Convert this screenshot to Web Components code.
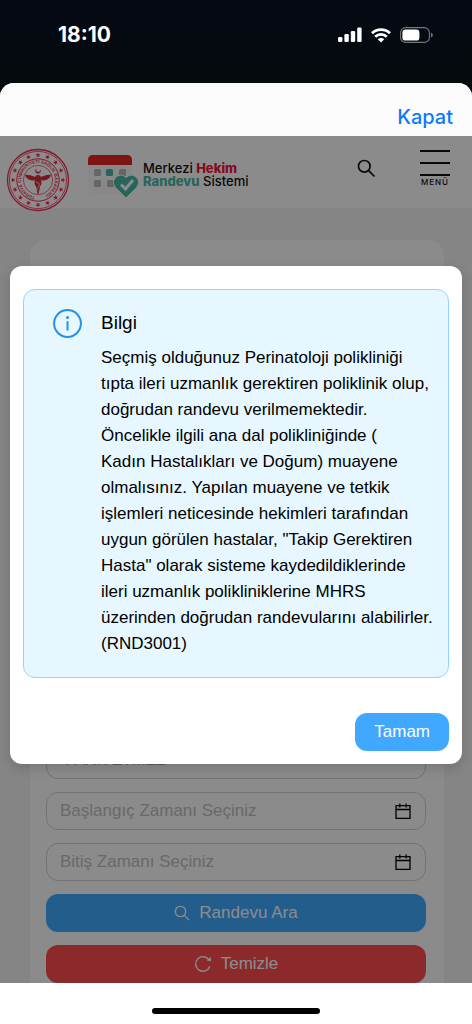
<!DOCTYPE html>
<html lang="tr">
<head>
<meta charset="utf-8">
<meta name="viewport" content="width=device-width, initial-scale=1">
<title>MHRS</title>
<style>
  html, body {
    height: 100%;
    margin: 0;
  }
  body {
    background: #050a10;
    color: #000;
    font-family: "Liberation Sans", Arial, sans-serif;
    font-size: 17px;
  }
</style>
</head>
<body>
<phone-screen>
  <status-bar slot="status" time="18:10"></status-bar>
  <sheet-toolbar slot="toolbar" label="Kapat"></sheet-toolbar>
  <site-header></site-header>
  <search-card>
    <select-field label="Hekim" value="-FARK ETMEZ-"></select-field>
    <date-field placeholder="Başlangıç Zamanı Seçiniz"></date-field>
    <date-field placeholder="Bitiş Zamanı Seçiniz"></date-field>
    <action-button icon="search">Randevu Ara</action-button>
    <action-button icon="reload" kind="danger">Temizle</action-button>
  </search-card>
  <info-modal slot="modal" heading="Bilgi">
    Seçmiş olduğunuz Perinatoloji polikliniği tıpta ileri uzmanlık gerektiren poliklinik olup, doğrudan randevu verilmemektedir. Öncelikle ilgili ana dal polikliniğinde (<br>Kadın Hastalıkları ve Doğum) muayene olmalısınız. Yapılan muayene ve tetkik işlemleri neticesinde hekimleri tarafından uygun görülen hastalar, "Takip Gerektiren Hasta" olarak sisteme kaydedildiklerinde ileri uzmanlık polikliniklerine MHRS üzerinden doğrudan randevularını alabilirler. (RND3001)
  </info-modal>
</phone-screen>

<script>
const icons = {
  search: /* html */`
    <svg viewBox="0 0 16 16" width="16" height="16" fill="none" stroke="currentColor" stroke-width="1.3" aria-hidden="true">
      <circle cx="6.5" cy="6.5" r="5.2"/><path d="M10.4 10.4L15 15"/>
    </svg>`,
  reload: /* html */`
    <svg viewBox="0 0 18 18" width="18" height="18" fill="none" stroke="currentColor" stroke-width="1.4" aria-hidden="true">
      <path d="M15.8 11.6A7.3 7.3 0 1 1 15 4.8"/><path d="M16.9 1.8v4.4l-4.2-.6z" fill="currentColor" stroke="none"/>
    </svg>`
}

class PhoneScreen extends HTMLElement {
  constructor () {
    super()
    this.attachShadow({ mode: 'open' })
    this.shadowRoot.innerHTML =
      /* html */`
      <style>
        :host {
          display: flex;
          flex-direction: column;
          height: 100vh;
          background: linear-gradient(#040914, #060b0e 83px);
        }
        .sheet {
          flex: 1;
          min-height: 0;
          display: flex;
          flex-direction: column;
          overflow: hidden;
          border-radius: 14px 14px 0 0;
          background: #fff;
        }
        .view {
          position: relative;
          flex: 1;
          min-height: 0;
          display: flex;
          flex-direction: column;
          overflow: hidden;
          background: #f3f3f3;
        }
        .mask {
          position: absolute;
          inset: 0;
          padding: 130px 10px 0;
          background: rgba(0, 0, 0, .45);
        }
        .home {
          display: flex;
          justify-content: center;
          padding: 25px 0 10px;
        }
        .home span {
          width: 168px;
          height: 6px;
          border-radius: 3px;
          background: #000;
        }
      </style>
      <slot name="status"></slot>
      <div class="sheet">
        <slot name="toolbar"></slot>
        <div class="view">
          <slot></slot>
          <div class="mask"><slot name="modal"></slot></div>
        </div>
        <div class="home"><span></span></div>
      </div>
      `
  }
}

class StatusBar extends HTMLElement {
  connectedCallback () {
    this.attachShadow({ mode: 'open' })
    this.shadowRoot.innerHTML =
      /* html */`
      <style>
        :host {
          display: flex;
          justify-content: space-between;
          align-items: center;
          height: 70px;
          padding: 0 39px 0 58px;
          margin-bottom: 13px;
          color: #fff;
          font: 700 21px/24px Inter, sans-serif;
        }
        .icons {
          display: flex;
          align-items: center;
          gap: 9px;
        }
        svg { display: block; }
      </style>
      <span>${this.getAttribute('time')}</span>
      <div class="icons">
        <svg width="24" height="16" viewBox="0 0 24 16" fill="#fff" aria-hidden="true">
          <rect x="0" y="10" width="4.4" height="5" rx="1.2"/>
          <rect x="6.4" y="7" width="4.4" height="8" rx="1.2"/>
          <rect x="12.8" y="4" width="4.4" height="11" rx="1.2"/>
          <rect x="19.2" y="0.5" width="4.4" height="14.5" rx="1.2"/>
        </svg>
        <svg width="20" height="15" viewBox="0 0 20 15" aria-hidden="true">
          <g fill="none" stroke="#fff" stroke-width="2.8">
            <path d="M1 5.2a13 13 0 0 1 18 0"/>
            <path d="M4.2 8.8a8.3 8.3 0 0 1 11.6 0"/>
          </g>
          <path d="M6.7 11.2a4.8 4.8 0 0 1 6.6 0L10 14.6z" fill="#fff"/>
        </svg>
        <svg width="33" height="16" viewBox="0 0 33 16" aria-hidden="true">
          <rect x=".6" y=".6" width="28.8" height="14.8" rx="5" fill="none" stroke="#74777b" stroke-width="1.1"/>
          <rect x="2.4" y="2.4" width="17" height="11.2" rx="3.2" fill="#fff"/>
          <path d="M31 5.4q1.9 1 1.9 2.6T31 10.6z" fill="#74777b"/>
        </svg>
      </div>
      `
  }
}

class SheetToolbar extends HTMLElement {
  connectedCallback () {
    this.attachShadow({ mode: 'open' })
    this.shadowRoot.innerHTML =
      /* html */`
      <style>
        :host {
          display: flex;
          justify-content: flex-end;
          padding: 22px 19px 7px;
          background: #fcfcfd;
        }
        button {
          border: 0;
          padding: 0;
          background: none;
          color: #0a7aff;
          font: 500 20px/24px Inter, sans-serif;
        }
      </style>
      <button type="button">${this.getAttribute('label')}</button>
      `
  }
}

class SiteHeader extends HTMLElement {
  connectedCallback () {
    this.attachShadow({ mode: 'open' })
    this.shadowRoot.innerHTML =
      /* html */`
      <style>
        :host {
          display: flex;
          align-items: center;
          height: 72px;
          padding: 0 22px 0 6px;
          background: #fdfdfd;
        }
        svg { display: block; }
        .emblem { margin-top: 16px; }
        .brand {
          display: flex;
          align-items: center;
          gap: 4px;
          margin: 10px auto 0 18px;
          color: #111;
          text-decoration: none;
          font: 500 13px/13px Inter, sans-serif;
          white-space: nowrap;
        }
        .name {
          display: grid;
          padding-bottom: 4px;
        }
        .red { color: #f0143c; font-weight: 800; }
        .green { color: #46b8a5; font-weight: 800; }
        button {
          border: 0;
          padding: 0;
          background: none;
          color: #111;
        }
        .search {
          margin-right: 44px;
          margin-bottom: 8px;
        }
        .menu {
          display: grid;
          gap: 2px;
          width: 30px;
          margin-bottom: 8px;
          font: 500 8px/8px Inter, sans-serif;
          letter-spacing: 1px;
        }
        .bars {
          display: grid;
          gap: 10px;
        }
        .bars span {
          display: block;
          height: 2px;
          background: #111;
        }
      </style>
      <svg class="emblem" width="64" height="64" viewBox="-32 -32 64 64" role="img" aria-label="Sağlık Bakanlığı">
        <defs>
          <path id="ring" d="M-3 16.6A16.9 16.9 0 1 1 3 16.6"/>
          <path id="star" d="M0-2.5L.7-.8 2.5-.7 1.1.4 1.6 2.2 0 1.2-1.6 2.2-1.1.4-2.5-.7-.7-.8z"/>
        </defs>
        <circle r="30.5" fill="#fff" stroke="#f02a50" stroke-width="1.3"/>
        <circle r="28.6" fill="none" stroke="#f02a50" stroke-width=".8"/>
        <circle r="21.2" fill="none" stroke="#f02a50"/>
        <circle r="14.6" fill="none" stroke="#f02a50" stroke-width=".7"/>
        <g class="stars" fill="#f02a50"></g>
        <text fill="#f02a50" font-family="Liberation Sans" font-weight="700" font-size="4.4"><textPath href="#ring">TÜRKİYE CUMHURİYETİ SAĞLIK BAKANLIĞI</textPath></text>
        <path d="M-13-5.5Q-7-5-4-3.4Q-2-3-1.4-5h2.8Q2-3 4-3.4Q7-5 13-5.5Q12-1 7 .2Q4 .8 3 0Q4.4 4 2 6.2L1 12 0 15-1 12-2 6.2Q-4.4 4-3 0Q-4 .8-7 .2Q-12-1-13-5.5z" fill="#d92c3c"/>
        <path d="M2.3-10.5A2.7 2.7 0 1 1-1.5-11.4 2.1 2.1 0 1 0 2.3-10.5z" fill="#f02a50"/>
        <path d="M-2 2q4 1 3.5 3T-1 8t1.5 3" fill="none" stroke="#fff" stroke-width=".7"/>
      </svg>
      <a class="brand" href="#">
        <svg width="51" height="44" viewBox="0 0 51 44" aria-hidden="true">
          <rect y="1" width="44" height="38" rx="5" fill="#f8f8f8"/>
          <path d="M0 10V5Q0 0 5 0h34q5 0 5 5v5z" fill="#e62525"/>
          <g fill="#b9b9b9">
            <rect x="6" y="14" width="7" height="7" rx="1.5"/>
            <rect x="31" y="14" width="7" height="7" rx="1.5"/>
            <rect x="6" y="25" width="7" height="7" rx="1.5"/>
            <rect x="19" y="25" width="7" height="7" rx="1.5"/>
          </g>
          <rect x="18" y="14" width="7" height="7" rx="1.5" fill="#46b8a5"/>
          <path d="M38 43L27.5 32.5Q23.5 27.5 27 23Q32.5 17.5 38 22.5Q43.5 17.5 49 23Q52.5 27.5 48.5 32.5z" fill="#46b8a5" stroke="#fdfdfd" stroke-width="1"/>
          <path d="M33 29.5l4.5 4.5 7.5-9" fill="none" stroke="#fff" stroke-width="3"/>
        </svg>
        <div class="name">
          <div>Merkezi <span class="red">Hekim</span></div>
          <div><span class="green">Randevu</span> Sistemi</div>
        </div>
      </a>
      <button class="search" type="button" aria-label="Ara">
        <svg width="19" height="19" viewBox="0 0 19 19" fill="none" stroke="currentColor" stroke-width="1.7" aria-hidden="true">
          <circle cx="7.3" cy="7.3" r="5.8"/><path d="M11.6 11.6L17.5 17.5"/>
        </svg>
      </button>
      <button class="menu" type="button">
        <div class="bars"><span></span><span></span><span></span></div>
        MENÜ
      </button>
      `
    let stars = ''
    for (let i = 0; i < 16; i++) {
      stars += `<use href="#star" transform="rotate(${i * 22.5}) translate(0 -25)"/>`
    }
    this.shadowRoot.querySelector('.stars').innerHTML = stars
  }
}

class SearchCard extends HTMLElement {
  constructor () {
    super()
    this.attachShadow({ mode: 'open' })
    this.shadowRoot.innerHTML =
      /* html */`
      <style>
        :host {
          flex: 1;
          display: flex;
          margin: 32px 28px 0 30px;
        }
        form {
          flex: 1;
          display: flex;
          flex-direction: column;
          justify-content: flex-end;
          gap: 13px;
          padding: 0 18px 0 16px;
          border-radius: 16px 16px 0 0;
          background: #fdfdfd;
        }
      </style>
      <form><slot></slot></form>
      `
  }
}

class SelectField extends HTMLElement {
  connectedCallback () {
    this.attachShadow({ mode: 'open' })
    this.shadowRoot.innerHTML =
      /* html */`
      <style>
        :host { display: block; }
        select {
          display: block;
          box-sizing: border-box;
          width: 100%;
          height: 38px;
          padding: 0 13px;
          appearance: none;
          border: 1px solid #d0d0d0;
          border-radius: 12px;
          background: none;
          color: #a5a5a5;
          font: 16px/36px "Liberation Sans", Arial, sans-serif;
        }
      </style>
      <select aria-label="${this.getAttribute('label')}">
        <option>${this.getAttribute('value')}</option>
      </select>
      `
  }
}

class DateField extends HTMLElement {
  connectedCallback () {
    this.attachShadow({ mode: 'open' })
    const placeholder = this.getAttribute('placeholder')
    this.shadowRoot.innerHTML =
      /* html */`
      <style>
        :host {
          display: flex;
          align-items: center;
          box-sizing: border-box;
          height: 38px;
          padding: 0 14px 0 13px;
          border: 1px solid #d0d0d0;
          border-radius: 12px;
        }
        input {
          flex: 1;
          min-width: 0;
          border: 0;
          padding: 0;
          outline: 0;
          background: none;
          font: 17px/36px "Liberation Sans", Arial, sans-serif;
        }
        input::placeholder { color: #bfbfbf; opacity: 1; }
      </style>
      <input type="text" placeholder="${placeholder}" aria-label="${placeholder}">
      <svg width="16" height="17" viewBox="0 0 16 17" fill="none" stroke="#000" stroke-width="1.3" aria-hidden="true">
        <path d="M1 2.6h14v12.8H1zM1 6.5h14M4.8 .5v4M11.2 .5v4"/>
      </svg>
      `
  }
}

class ActionButton extends HTMLElement {
  connectedCallback () {
    this.attachShadow({ mode: 'open' })
    this.shadowRoot.innerHTML =
      /* html */`
      <style>
        :host { display: block; --fill: #40a9ff; }
        :host([kind="danger"]) { --fill: #ff4d4f; }
        button {
          display: flex;
          justify-content: center;
          align-items: center;
          gap: 9px;
          width: 100%;
          height: 38px;
          border: 0;
          border-radius: 12px;
          background: var(--fill);
          color: #fff;
          font: 17px/20px "Liberation Sans", Arial, sans-serif;
        }
      </style>
      <button type="button">${icons[this.getAttribute('icon')]}<span><slot></slot></span></button>
      `
  }
}

class InfoModal extends HTMLElement {
  connectedCallback () {
    this.attachShadow({ mode: 'open' })
    this.shadowRoot.innerHTML =
      /* html */`
      <style>
        :host {
          display: block;
          padding: 23px 13px 13px;
          border-radius: 12px;
          background: #fff;
          box-shadow: 0 4px 12px rgba(0, 0, 0, .15);
        }
        .alert {
          display: flex;
          align-items: flex-start;
          gap: 19px;
          padding: 19px 14px 20px 29px;
          border: 1px solid #91d5ff;
          border-radius: 12px;
          background: #e6f7ff;
        }
        .alert svg { flex: none; }
        h3 {
          margin: 0 0 8px;
          font-size: 19px;
          font-weight: 400;
          line-height: 28px;
        }
        p {
          margin: 0;
          line-height: 26px;
        }
        .footer {
          display: flex;
          justify-content: flex-end;
          margin-top: 35px;
        }
        button {
          height: 38px;
          padding: 0 19px;
          border: 0;
          border-radius: 12px;
          background: #40a9ff;
          color: #fff;
          font: 17px/20px "Liberation Sans", Arial, sans-serif;
        }
      </style>
      <div role="dialog" aria-modal="true" aria-labelledby="title">
        <div class="alert">
          <svg width="29" height="29" viewBox="0 0 29 29" aria-hidden="true">
            <circle cx="14.5" cy="14.5" r="13.4" fill="none" stroke="#2490ee" stroke-width="2"/>
            <circle cx="14.5" cy="8.6" r="1.5" fill="#2490ee"/>
            <path d="M14.5 12.2v9.3" stroke="#2490ee" stroke-width="2"/>
          </svg>
          <div>
            <h3 id="title">${this.getAttribute('heading')}</h3>
            <p><slot></slot></p>
          </div>
        </div>
        <div class="footer"><button type="button">Tamam</button></div>
      </div>
      `
  }
}

customElements.define('phone-screen', PhoneScreen)
customElements.define('status-bar', StatusBar)
customElements.define('sheet-toolbar', SheetToolbar)
customElements.define('site-header', SiteHeader)
customElements.define('search-card', SearchCard)
customElements.define('select-field', SelectField)
customElements.define('date-field', DateField)
customElements.define('action-button', ActionButton)
customElements.define('info-modal', InfoModal)
</script>
</body>
</html>
